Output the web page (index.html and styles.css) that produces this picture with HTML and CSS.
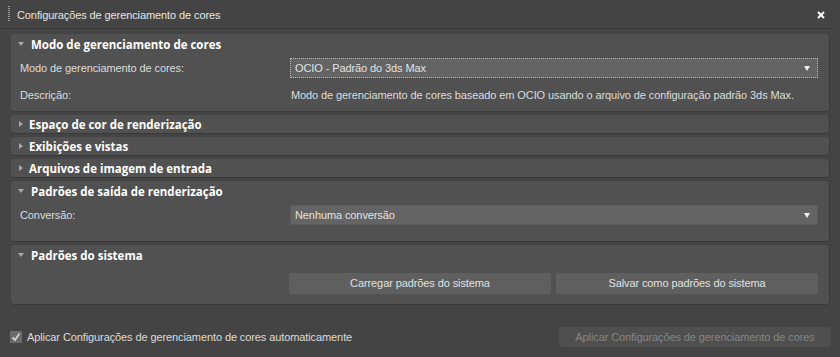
FILE: index.html
```html
<!DOCTYPE html>
<html lang="pt">
<head>
    <meta charset="UTF-8">
    <title>Configurações de gerenciamento de cores</title>
    <link rel="stylesheet" href="styles.css">
</head>
<body>
    <div class="window">
        <div class="titlebar">
            <span class="grip"></span>
            <span class="title">Configurações de gerenciamento de cores</span>
            <svg class="close" width="8" height="8" viewBox="0 0 8 8">
                <path d="M1 1 L7 7 M7 1 L1 7" stroke="#ffffff" stroke-width="2" />
            </svg>
        </div>

        <div class="content">
            <div class="panel">
                <div class="panel-head"><span class="tri down"></span>Modo de gerenciamento de cores</div>
                <div class="panel-body body-mode">
                    <div class="row">
                        <span class="label">Modo de gerenciamento de cores:</span>
                        <div class="select focused">OCIO - Padrão do 3ds Max<span class="arrow"></span></div>
                    </div>
                    <div class="row">
                        <span class="label">Descrição:</span>
                        <span class="desc">Modo de gerenciamento de cores baseado em OCIO usando o arquivo de configuração padrão 3ds Max.</span>
                    </div>
                </div>
            </div>

            <div class="panel">
                <div class="panel-head small"><span class="tri right"></span>Espaço de cor de renderização</div>
            </div>
            <div class="panel">
                <div class="panel-head small"><span class="tri right"></span>Exibições e vistas</div>
            </div>
            <div class="panel">
                <div class="panel-head small"><span class="tri right"></span>Arquivos de imagem de entrada</div>
            </div>

            <div class="panel">
                <div class="panel-head"><span class="tri down"></span>Padrões de saída de renderização</div>
                <div class="panel-body body-output">
                    <div class="row">
                        <span class="label">Conversão:</span>
                        <div class="select">Nenhuma conversão<span class="arrow"></span></div>
                    </div>
                </div>
            </div>

            <div class="panel">
                <div class="panel-head"><span class="tri down"></span>Padrões do sistema</div>
                <div class="panel-body body-system">
                    <div class="row">
                        <span class="label"></span>
                        <div class="buttons">
                            <button class="btn">Carregar padrões do sistema</button>
                            <button class="btn">Salvar como padrões do sistema</button>
                        </div>
                    </div>
                </div>
            </div>
        </div>

        <div class="footer">
            <label class="check">
                <span class="box">
                    <svg width="12" height="12" viewBox="0 0 12 12">
                        <path d="M2.5 6.5 L5 9 L9.5 2.5" stroke="#d0d0d0" stroke-width="1.8" fill="none" />
                    </svg>
                </span>
                Aplicar Configurações de gerenciamento de cores automaticamente
            </label>
            <button class="btn apply" disabled>Aplicar Configurações de gerenciamento de cores</button>
        </div>
    </div>
</body>
</html>
```
FILE: styles.css
```css
body {
    margin: 0;
    background: #444444;
    font-family: 'Liberation Sans', Arial, sans-serif;
    font-size: 11px;
    letter-spacing: -0.1px;
    color: #dcdcdc;
    overflow: hidden;
}
.window {
    width: 840px;
    height: 357px;
    display: flex;
    flex-direction: column;
}
.titlebar {
    height: 28px;
    display: flex;
    align-items: center;
    border-bottom: 1px solid #393939;
    margin-right: 7px;
}
.grip {
    width: 2px;
    height: 16px;
    margin-left: 8px;
    margin-right: 7px;
    background: repeating-linear-gradient(to bottom, #9a9a9a 0, #9a9a9a 1px, transparent 1px, transparent 2px);
}
.title {
    flex: 1;
    color: #e4e4e4;
    padding-top: 1px;
}
.close {
    margin-right: 8px;
    margin-top: 2px;
}
.content {
    display: flex;
    flex-direction: column;
    gap: 4px;
    padding: 5px 11px 0 11px;
}
.panel {
    background: #515151;
    border-radius: 3px;
    box-shadow: 0 1px 0 #3a3a3a, 1px 0 0 #3c3c3c;
}
.panel-head {
    height: 20px;
    display: flex;
    align-items: center;
    font-family: 'Open Sans', 'Liberation Sans', sans-serif;
    font-weight: 700;
    letter-spacing: 0;
    color: #ffffff;
    font-size: 11.5px;
    padding-top: 1px;
    box-sizing: border-box;
}
.panel-head.small {
    height: 18px;
    padding-top: 0;
}
.tri {
    width: 0;
    height: 0;
    margin-left: 7px;
    margin-right: 7px;
}
.tri.down {
    border-left: 3px solid transparent;
    border-right: 3px solid transparent;
    border-top: 4px solid #a8a8a8;
    margin-top: -2px;
}
.tri.right {
    border-top: 3px solid transparent;
    border-bottom: 3px solid transparent;
    border-left: 4px solid #a8a8a8;
    margin-left: 8px;
    margin-right: 6px;
}
.panel-body {
    display: flex;
    flex-direction: column;
    padding: 0 11px 0 9px;
}
.body-mode {
    padding-top: 4px;
    padding-bottom: 6px;
    gap: 7px;
}
.body-output {
    padding-top: 4px;
    padding-bottom: 16px;
}
.body-system {
    padding-top: 8px;
    padding-bottom: 11px;
}
.row {
    display: flex;
    align-items: center;
    height: 20px;
}
.label {
    width: 270px;
    flex-shrink: 0;
}
.select {
    flex: 1;
    height: 20px;
    box-sizing: border-box;
    background: #646464;
    border: 1px solid #5a5a5a;
    display: flex;
    align-items: center;
    padding-left: 4px;
    position: relative;
    color: #e2e2e2;
}
.select.focused {
    border: 1px dotted #b8b8b8;
}
.arrow {
    position: absolute;
    right: 7px;
    top: 7px;
    width: 0;
    height: 0;
    border-left: 3.5px solid transparent;
    border-right: 3.5px solid transparent;
    border-top: 5px solid #f0f0f0;
}
.desc {
    padding-left: 1px;
}
.buttons {
    flex: 1;
    display: flex;
    gap: 5px;
    margin-left: -1px;
}
.btn {
    flex: 1;
    height: 21px;
    background: #5f5f5f;
    border: none;
    border-radius: 2px;
    color: #e0e0e0;
    font-family: 'Liberation Sans', Arial, sans-serif;
    font-size: 11px;
    letter-spacing: -0.1px;
    padding: 0;
}
.footer {
    flex: 1;
    display: flex;
    align-items: center;
    justify-content: space-between;
    padding: 12px 9px 0 10px;
}
.check {
    display: flex;
    align-items: center;
    gap: 5px;
}
.box {
    width: 12px;
    height: 12px;
    background: #6a6a6a;
    display: flex;
}
.btn.apply {
    flex: none;
    width: 272px;
    height: 20px;
    background: #4f4f4f;
    color: #858585;
    border-radius: 3px;
}
```
